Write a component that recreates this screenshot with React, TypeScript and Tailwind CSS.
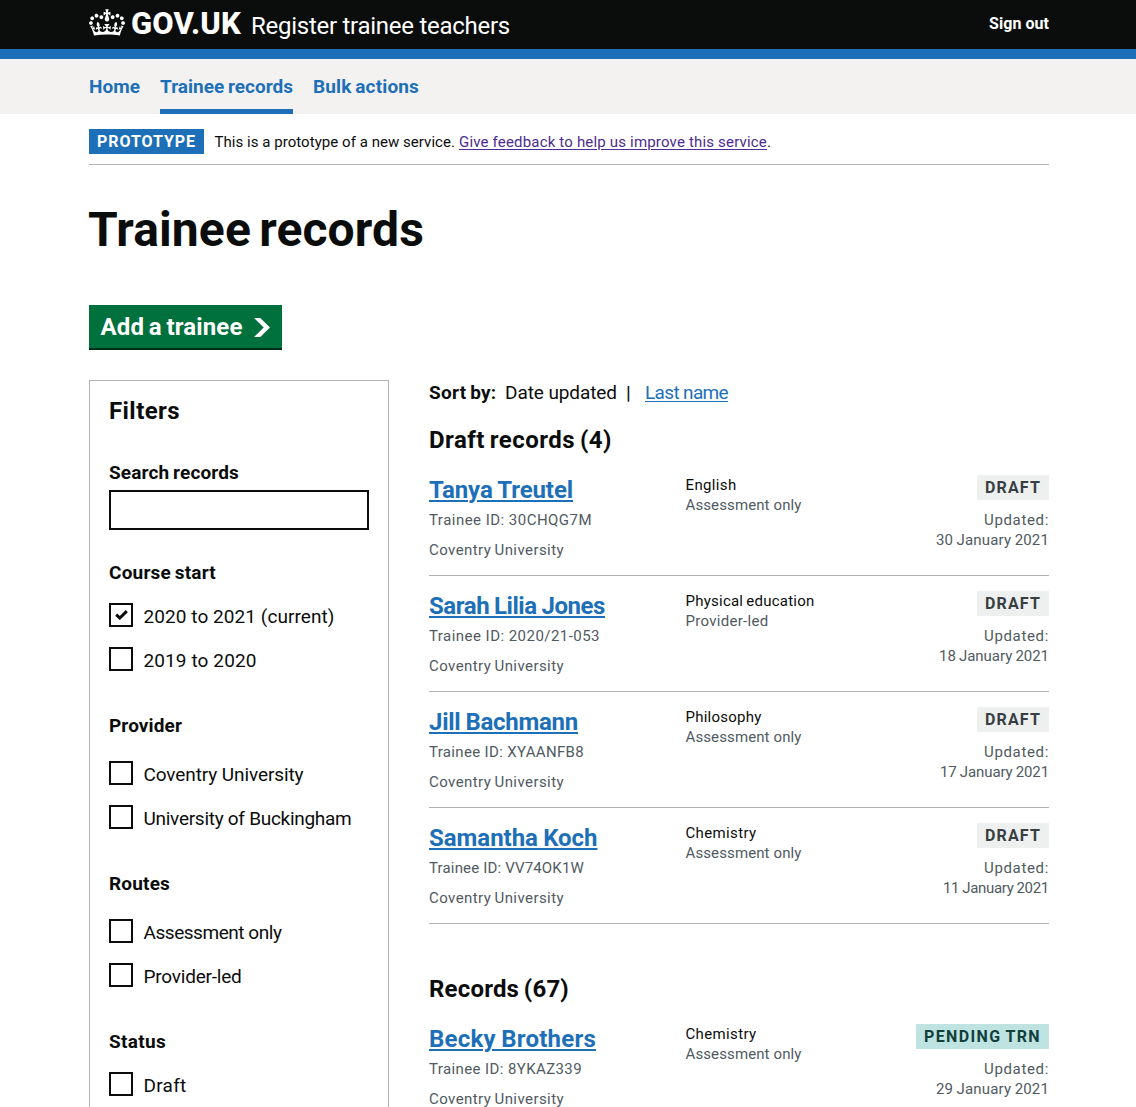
import { useLayoutEffect, useRef, useState } from 'react';

/* Text set to a given advance width by adjusting its tracking. */
function T({ w, c = '', children }: { w: number; c?: string; children: string }) {
  const ref = useRef<HTMLSpanElement>(null);
  const [spacing, setSpacing] = useState(0);
  useLayoutEffect(() => {
    const el = ref.current!;
    el.style.letterSpacing = '0px';
    const value = (w - el.getBoundingClientRect().width) / children.length;
    el.style.letterSpacing = `${value}px`;
    setSpacing(value);
  }, [w, children]);
  return (
    <span ref={ref} className={`inline-block whitespace-nowrap ${c}`} style={{ letterSpacing: spacing }}>
      {children}
    </span>
  );
}

function Crown() {
  return (
    <svg className="block h-[27px] w-9" viewBox="0 0 132 97" fill="currentColor" aria-hidden="true">
      <path
        fillRule="evenodd"
        d="M25 30.2c3.5 1.5 7.7-.2 9.1-3.7 1.5-3.6-.2-7.8-3.9-9.2-3.6-1.4-7.6.3-9.1 3.9-1.4 3.5.3 7.5 3.9 9zM9 39.5c3.6 1.5 7.8-.2 9.2-3.7 1.5-3.6-.2-7.8-3.9-9.1-3.6-1.5-7.6.2-9.1 3.8-1.4 3.5.3 7.5 3.8 9zM4.4 57.2c3.5 1.5 7.7-.2 9.1-3.8 1.5-3.6-.2-7.7-3.9-9.1-3.5-1.5-7.6.3-9.1 3.8-1.4 3.5.3 7.6 3.9 9.1zm38.3-21.4c3.5 1.5 7.7-.2 9.1-3.8 1.5-3.6-.2-7.7-3.9-9.1-3.6-1.5-7.6.3-9.1 3.8-1.3 3.6.4 7.7 3.9 9.1zm64.4-5.6c-3.6 1.5-7.8-.2-9.1-3.7-1.5-3.6.2-7.8 3.8-9.2 3.6-1.4 7.7.3 9.2 3.9 1.3 3.5-.4 7.5-3.9 9zm15.9 9.3c-3.6 1.5-7.7-.2-9.1-3.7-1.5-3.6.2-7.8 3.7-9.1 3.6-1.5 7.7.2 9.2 3.8 1.5 3.5-.3 7.5-3.8 9zm4.7 17.7c-3.6 1.5-7.8-.2-9.2-3.8-1.5-3.6.2-7.7 3.9-9.1 3.6-1.5 7.7.3 9.2 3.8 1.3 3.5-.4 7.6-3.9 9.1zM89.3 35.8c-3.6 1.5-7.8-.2-9.2-3.8-1.4-3.6.2-7.7 3.9-9.1 3.6-1.5 7.7.3 9.2 3.8 1.4 3.6-.3 7.7-3.9 9.1zM69.7 17.7l8.9 4.7V9.3l-8.9 2.8c-.2-.3-.5-.6-.9-.9L72.4 0H59.6l3.5 11.2c-.3.3-.6.5-.9.9l-8.8-2.8v13.1l8.8-4.7c.3.3.6.7.9.9l-5 15.4v.1c-.2.8-.4 1.6-.4 2.4 0 4.1 3.1 7.5 7 8.1h.2c.3 0 .7.1 1 .1.4 0 .7 0 1-.1h.2c4-.6 7.1-4.1 7.1-8.1 0-.8-.1-1.7-.4-2.4V34l-5.1-15.4c.4-.2.7-.6 1-.9zM66 92.8c16.9 0 32.8 1.1 47.1 3.2 4-16.9 8.9-26.7 14-33.5l-9.6-3.4c1 4.9 1.1 7.2 0 10.2-1.5-1.4-3-4.3-4.2-8.7L108.6 76c2.8-2 5-3.2 7.5-3.3-4.4 9.4-10 11.9-13.6 11.2-4.3-.8-6.3-4.6-5.6-7.9 1-4.7 5.7-5.9 8-.5 4.3-8.7-3-11.4-7.6-8.8 7.1-7.2 7.9-13.5 2.1-21.1-8 6.1-8.1 12.3-4.5 20.8-4.7-5.4-12.1-2.5-9.5 6.2 3.4-5.2 7.9-2 7.2 3.1-.6 4.3-6.4 7.8-13.5 7.2-10.3-.9-10.9-8-11.2-13.8 2.5-.5 7.1 1.8 11 7.3L80.2 60c-4.1 4.4-8 5.3-12.3 5.4 1.4-4.4 8-11.6 8-11.6H55.5s6.4 7.2 7.9 11.6c-4.2-.1-8-1-12.3-5.4l1.4 16.4c3.9-5.5 8.5-7.7 10.9-7.3-.3 5.8-.9 12.8-11.1 13.8-7.2.6-12.9-2.9-13.5-7.2-.7-5 3.8-8.3 7.1-3.1 2.7-8.7-4.6-11.6-9.4-6.2 3.7-8.5 3.6-14.7-4.6-20.8-5.8 7.6-5 13.9 2.2 21.1-4.7-2.6-11.9.1-7.7 8.8 2.3-5.5 7.1-4.2 8.1.5.7 3.3-1.3 7.1-5.7 7.9-3.5.7-9-1.8-13.5-11.2 2.5.1 4.7 1.3 7.5 3.3l-4.7-15.4c-1.2 4.4-2.7 7.2-4.3 8.7-1.1-3-.9-5.3 0-10.2l-9.5 3.4c5 6.9 9.9 16.7 14 33.5 14.8-2.1 30.8-3.2 47.7-3.2z"
      />
    </svg>
  );
}

type Option = [label: string, width: number, checked?: boolean];

function FilterGroup({ title, w, gap, options }: { title: string; w: number; gap: string; options: Option[] }) {
  return (
    <fieldset>
      <h3 className="h-[25px] text-[19px] leading-[25px] font-bold"><T w={w} c="[word-spacing:-0.06em]">{title}</T></h3>
      <div className={`flex flex-col gap-5 ${gap}`}>
        {options.map(([label, width, checked]) => (
          <label key={label} className="flex h-6 items-start gap-[10.5px]">
            <span className="flex size-6 items-start justify-center border-2 border-[#0b0c0c] bg-white pt-[5px]">
              {checked && (
                <svg className="block h-[10px] w-[13px]" viewBox="0 0 13 10" fill="none" stroke="#0b0c0c" strokeWidth="3">
                  <path d="M1.2 4.6 4.8 8 11.8 1.2" />
                </svg>
              )}
            </span>
            <span className="mt-px h-[25px] text-[19px] leading-[25px]"><T w={width}>{label}</T></span>
          </label>
        ))}
      </div>
    </fieldset>
  );
}

type Rec = {
  name: [string, number]; id: [string, number]; subject: [string, number];
  route: [string, number]; date: [string, number]; pending?: boolean;
};

const ao: [string, number] = ['Assessment only', 116];
const drafts: Rec[] = [
  { name: ['Tanya Treutel', 144], id: ['Trainee ID: 30CHQG7M', 163], subject: ['English', 51], route: ao, date: ['30 January 2021', 113] },
  { name: ['Sarah Lilia Jones', 176], id: ['Trainee ID: 2020/21-053', 171], subject: ['Physical education', 129], route: ['Provider-led', 83], date: ['18 January 2021', 110] },
  { name: ['Jill Bachmann', 149], id: ['Trainee ID: XYAANFB8', 155], subject: ['Philosophy', 76], route: ao, date: ['17 January 2021', 109] },
  { name: ['Samantha Koch', 168.5], id: ['Trainee ID: VV74OK1W', 155], subject: ['Chemistry', 71], route: ao, date: ['11 January 2021', 106] },
];
const records: Rec[] = [
  { name: ['Becky Brothers', 167], id: ['Trainee ID: 8YKAZ339', 153], subject: ['Chemistry', 71], route: ao, date: ['29 January 2021', 113], pending: true },
];

function RecordRow({ r }: { r: Rec }) {
  return (
    <li className="flex h-[116px] border-b border-[#b1b4b6] pt-[15px] text-[15px] leading-5 text-[#505a5f]">
      <div className="w-[256.5px]">
        <h3 className="h-[30px] text-2xl leading-[30px] font-bold">
          <a href="#" className="text-[#1d70b8]">
            <T w={r.name[1]} c="underline decoration-2 underline-offset-[2px] [word-spacing:-0.03em]">{r.name[0]}</T>
          </a>
        </h3>
        <p className="mt-[5px] h-5"><T w={r.id[1]}>{r.id[0]}</T></p>
        <p className="mt-[10px] h-5"><T w={135} c="[word-spacing:-0.06em]">Coventry University</T></p>
      </div>
      <div className="flex-1">
        <p className="h-5 text-[#0b0c0c]"><T w={r.subject[1]} c="[word-spacing:-0.06em]">{r.subject[0]}</T></p>
        <p className="h-5"><T w={r.route[1]}>{r.route[0]}</T></p>
      </div>
      <div className="flex flex-col items-end">
        {r.pending ? (
          <strong className="h-[25px] bg-[#bfe3e0] px-2 text-base leading-[25px] text-[#10403c]"><T w={117} c="[word-spacing:-0.06em]">PENDING TRN</T></strong>
        ) : (
          <strong className="h-[25px] bg-[#eeefef] px-2 text-base leading-[25px] text-[#383f43]"><T w={56}>DRAFT</T></strong>
        )}
        <p className="mt-[10px] h-5"><T w={65}>Updated:</T></p>
        <p className="h-5"><T w={r.date[1]} c="[word-spacing:-0.03em]">{r.date[0]}</T></p>
      </div>
    </li>
  );
}

export default function App() {
  return (
    <div className="h-[1107px] overflow-hidden bg-white font-['Roboto',sans-serif] text-[#0b0c0c] antialiased">
      <header className="h-[59px] border-b-[10px] border-[#1d70b8] bg-[#0b0c0c] text-white">
        <div className="ml-[89px] flex w-[960px] items-start">
          <div className="mt-[9px]"><Crown /></div>
          <span className="mt-[6px] ml-[6px] h-9 text-[31px] leading-9 font-extrabold"><T w={110}>GOV.UK</T></span>
          <span className="mt-[11px] ml-[10px] h-[30px] text-2xl leading-[30px]"><T w={259}>Register trainee teachers</T></span>
          <a href="#" className="mt-[14px] ml-auto h-5 text-base leading-5 font-bold"><T w={60}>Sign out</T></a>
        </div>
      </header>
      <nav className="h-[55px] bg-[#f3f2f1]">
        <div className="ml-[89px] flex w-[960px] gap-5 text-[19px] leading-[25px] font-bold text-[#1d70b8]">
          <a href="#" className="h-[55px] pt-[15px]"><T w={51}>Home</T></a>
          <a href="#" className="h-[55px] border-b-[5px] border-[#1d70b8] pt-[15px]"><T w={133} c="[word-spacing:-0.06em]">Trainee records</T></a>
          <a href="#" className="h-[55px] pt-[15px]"><T w={106} c="[word-spacing:-0.06em]">Bulk actions</T></a>
        </div>
      </nav>

      <div className="ml-[89px] w-[960px]">
        <div className="flex h-[51px] items-start border-b border-[#b1b4b6] pt-[15px] text-base">
          <strong className="h-[25px] bg-[#1d70b8] px-2 leading-[25px] text-white"><T w={99}>PROTOTYPE</T></strong>
          <p className="mt-[3px] ml-[10.5px] flex h-5 text-[15px] leading-5">
            <T w={240.5}>This is a prototype of a new service.</T>
            <a href="#" className="ml-[4px] text-[#4c2c92]"><T w={308} c="underline underline-offset-[2px]">Give feedback to help us improve this service</T></a>
            <span>.</span>
          </p>
        </div>

        <h1 className="mt-10 h-[50px] text-5xl leading-[50px] font-bold"><T w={336} c="-ml-px [word-spacing:-0.08em]">Trainee records</T></h1>

        <a href="#" className="mt-[50px] flex h-[45px] w-[193px] items-start border-b-2 border-[#002d18] bg-[#00703c] pt-[7px] pl-[11.5px] text-white">
          <span className="h-[30px] text-2xl leading-[30px] font-bold"><T w={142} c="[word-spacing:-0.06em]">Add a trainee</T></span>
          <svg className="mt-[6px] ml-[11px] block h-[19px] w-[16px]" viewBox="0 0 33 40" preserveAspectRatio="none" fill="currentColor">
            <path d="M0 0h13l20 20-20 20H0l20-20z" />
          </svg>
        </a>

        <div className="mt-[30px] flex items-start">
          <aside className="h-[760px] w-[300px] shrink-0 border border-[#b1b4b6] px-[19px]">
            <h2 className="mt-[15px] h-[30px] text-2xl leading-[30px] font-bold"><T w={71}>Filters</T></h2>
            <label htmlFor="search" className="mt-[34px] block h-[25px] text-[19px] leading-[25px] font-bold"><T w={130} c="[word-spacing:-0.06em]">Search records</T></label>
            <input id="search" className="mt-[5px] block h-10 w-[260px] border-2 border-[#0b0c0c] bg-white" />
            <div className="mt-[30px] flex flex-col">
              <FilterGroup title="Course start" w={107} gap="mt-[18px]" options={[['2020 to 2021 (current)', 191, true], ['2019 to 2020', 113]]} />
              <div className="mt-[42px]">
                <FilterGroup title="Provider" w={73} gap="mt-[23px]" options={[['Coventry University', 160], ['University of Buckingham', 208]]} />
              </div>
              <div className="mt-[42px]">
                <FilterGroup title="Routes" w={61} gap="mt-[23px]" options={[['Assessment only', 138], ['Provider-led', 98]]} />
              </div>
              <div className="mt-[42px]">
                <FilterGroup title="Status" w={57} gap="mt-[18px]" options={[['Draft', 43]]} />
              </div>
            </div>
          </aside>

          <main className="ml-10 w-[620px]">
            <div className="flex h-[25px] text-[19px] leading-[25px]">
              <strong><T w={67.5} c="[word-spacing:-0.06em]">Sort by:</T></strong>
              <span className="ml-[8.5px]"><T w={112}>Date updated</T></span>
              <span className="ml-[9px] w-[6px] font-medium">|</span>
              <a href="#" className="ml-[13px] text-[#1d70b8]"><T w={83} c="underline underline-offset-[2px]">Last name</T></a>
            </div>
            <h2 className="mt-5 h-[30px] text-2xl leading-[30px] font-bold"><T w={183} c="[word-spacing:-0.06em]">Draft records (4)</T></h2>
            <ul className="mt-[5px]">{drafts.map((r) => <RecordRow key={r.name[0]} r={r} />)}</ul>
            <h2 className="mt-[50px] h-[30px] text-2xl leading-[30px] font-bold"><T w={140} c="[word-spacing:-0.06em]">Records (67)</T></h2>
            <ul className="mt-[5px]">{records.map((r) => <RecordRow key={r.name[0]} r={r} />)}</ul>
          </main>
        </div>
      </div>
    </div>
  );
}
